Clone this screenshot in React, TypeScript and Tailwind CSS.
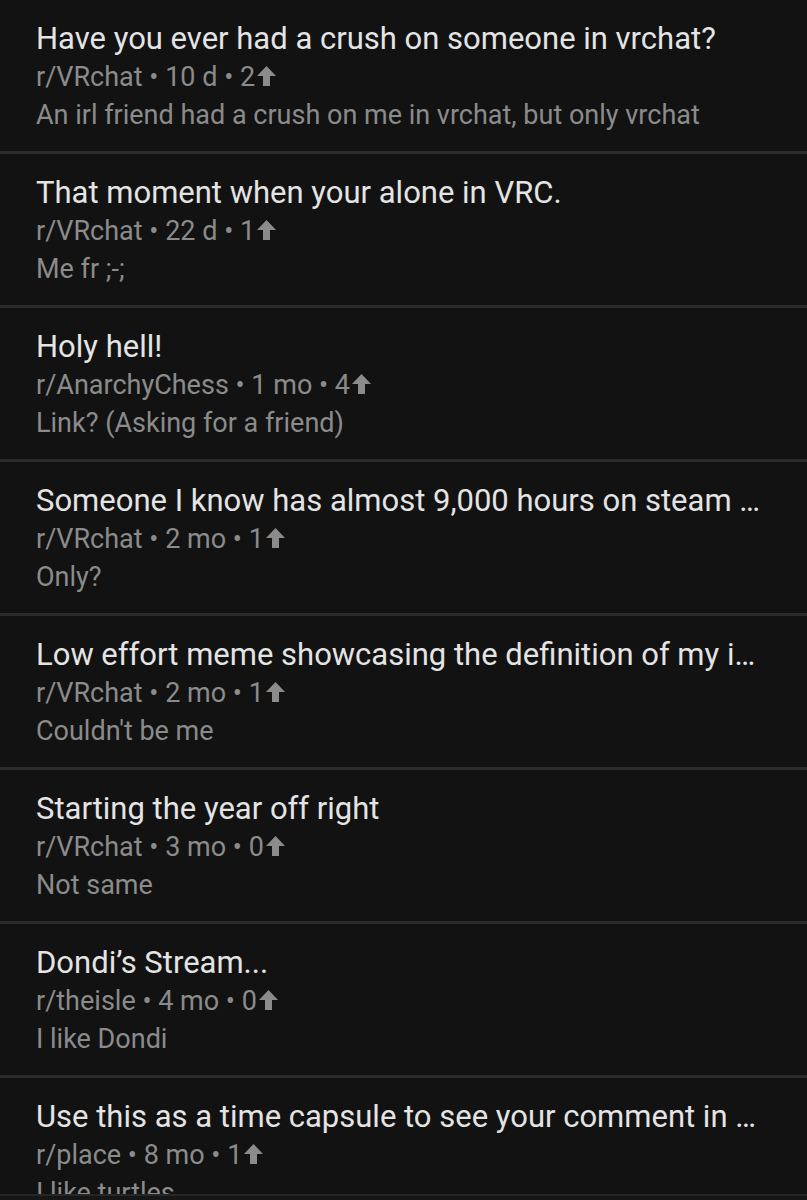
import React from 'react'

type Item = {
  title: string
  sub: string
  age: string
  votes: number
  body: string
}

const items: Item[] = [
  {
    title: 'Have you ever had a crush on someone in vrchat?',
    sub: 'r/VRchat',
    age: '10 d',
    votes: 2,
    body: 'An irl friend had a crush on me in vrchat, but only vrchat',
  },
  { title: 'That moment when your alone in VRC.', sub: 'r/VRchat', age: '22 d', votes: 1, body: 'Me fr ;-;' },
  { title: 'Holy hell!', sub: 'r/AnarchyChess', age: '1 mo', votes: 4, body: 'Link? (Asking for a friend)' },
  {
    title: 'Someone I know has almost 9,000 hours on steam …',
    sub: 'r/VRchat',
    age: '2 mo',
    votes: 1,
    body: 'Only?',
  },
  {
    title: 'Low effort meme showcasing the definition of my i…',
    sub: 'r/VRchat',
    age: '2 mo',
    votes: 1,
    body: "Couldn't be me",
  },
  { title: 'Starting the year off right', sub: 'r/VRchat', age: '3 mo', votes: 0, body: 'Not same' },
  { title: 'Dondi’s Stream...', sub: 'r/theisle', age: '4 mo', votes: 0, body: 'I like Dondi' },
  {
    title: 'Use this as a time capsule to see your comment in …',
    sub: 'r/place',
    age: '8 mo',
    votes: 1,
    body: 'I like turtles',
  },
]

function UpArrow() {
  return (
    <svg width="19" height="20" viewBox="0 0 19 20" className="ml-[2px] mb-[2px] shrink-0" fill="#8b8b8b">
      <path d="M9.5 0 L19 10 L13 10 L13 20 L6 20 L6 10 L0 10 Z" />
    </svg>
  )
}

function Row({ item, last }: { item: Item; last: boolean }) {
  return (
    <div className={`px-[36px] pt-[20px] pb-[17px] ${last ? '' : 'border-b-[3px] border-[#2b2b2b]'}`}>
      <div className="h-[38px] leading-[38px] text-[31px] text-[#e4e4e4] whitespace-nowrap overflow-hidden">
        {item.title}
      </div>
      <div className="h-[38px] leading-[38px] text-[27px] text-[#8b8b8b] flex items-center whitespace-nowrap">
        <span>
          {item.sub} • {item.age} • {item.votes}
        </span>
        <UpArrow />
      </div>
      <div className="h-[38px] leading-[38px] text-[27px] text-[#8b8b8b] whitespace-nowrap">{item.body}</div>
    </div>
  )
}

export default function App() {
  return (
    <div
      className="w-[807px] h-[1200px] bg-[#121212] flex flex-col overflow-hidden"
      style={{ fontFamily: 'Roboto, "Noto Sans", sans-serif' }}
    >
      <div className="flex-1 overflow-hidden">
        {items.map((it, i) => (
          <Row key={i} item={it} last={i === items.length - 1} />
        ))}
      </div>
      {/* bottom bar edge */}
      <div className="h-[6px] border-t-[2px] border-[#262626] bg-[#161616]" />
    </div>
  )
}
